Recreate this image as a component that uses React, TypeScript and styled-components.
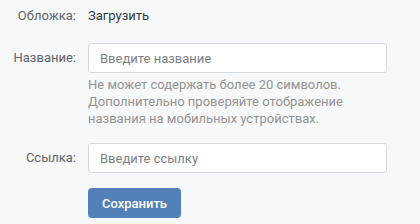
import React from 'react';
import styled, { createGlobalStyle } from 'styled-components';

const GlobalStyle = createGlobalStyle`
  body {
    margin: 0;
    background: #f7f8fa;
    font-family: Roboto, 'Open Sans', Arial, sans-serif;
    font-size: 13px;
    -webkit-font-smoothing: antialiased;
  }
`;

const Form = styled.div`
  padding-top: 7px;
  display: flex;
  flex-direction: column;
`;

const Row = styled.div<{ top: number }>`
  display: flex;
  align-items: flex-start;
  margin-top: ${({ top }) => top}px;
`;

const Label = styled.div<{ tall?: boolean }>`
  width: 76px;
  flex: none;
  padding-right: 12px;
  text-align: right;
  color: #5f6266;
  line-height: ${({ tall }) => (tall ? '30px' : '18px')};
`;

const Field = styled.div`
  width: 299px;
  display: flex;
  flex-direction: column;
`;

const Link = styled.a`
  color: #2e3a47;
  line-height: 18px;
  cursor: pointer;
`;

const Input = styled.input`
  box-sizing: border-box;
  width: 100%;
  height: 30px;
  padding: 0 11px;
  border: 1px solid #d3d9de;
  border-radius: 3px;
  background: #fff;
  font: inherit;
  color: #000;
  outline: none;
  &::placeholder {
    color: #7b7f84;
  }
`;

const Hint = styled.div`
  margin-top: 3px;
  color: #939393;
  line-height: 17px;
`;

const Button = styled.button`
  width: 93px;
  height: 30px;
  border: 0;
  border-radius: 4px;
  background: #5181b8;
  color: #fff;
  font: inherit;
  font-weight: 500;
  cursor: pointer;
`;

export default function App() {
  return (
    <>
      <GlobalStyle />
      <Form>
        <Row top={0}>
          <Label>Обложка:</Label>
          <Field>
            <Link>Загрузить</Link>
          </Field>
        </Row>
        <Row top={18}>
          <Label tall>Название:</Label>
          <Field>
            <Input placeholder="Введите название" />
            <Hint>
              Не может содержать более 20 символов.
              <br />
              Дополнительно проверяйте отображение
              <br />
              названия на мобильных устройствах.
            </Hint>
          </Field>
        </Row>
        <Row top={16}>
          <Label tall>Ссылка:</Label>
          <Field>
            <Input placeholder="Введите ссылку" />
          </Field>
        </Row>
        <Row top={15}>
          <Label />
          <Field>
            <div>
              <Button>Сохранить</Button>
            </div>
          </Field>
        </Row>
      </Form>
    </>
  );
}
